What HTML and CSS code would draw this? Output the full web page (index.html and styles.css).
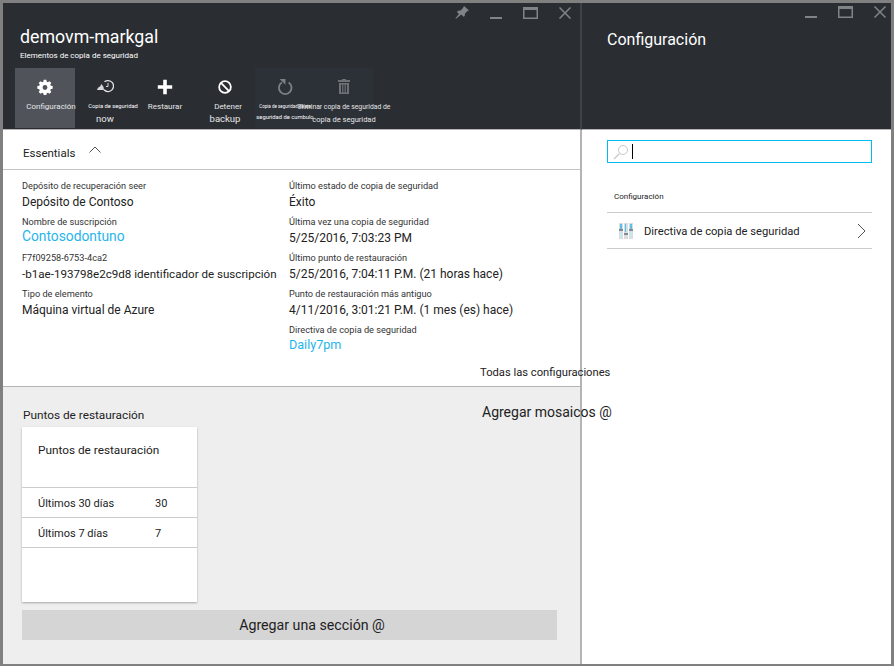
FILE: index.html
```html
<!DOCTYPE html>
<html lang="es">
<head>
    <meta charset="UTF-8">
    <title>demovm-markgal</title>
    <link rel="stylesheet" href="styles.css">
</head>
<body>

<div class="window">

    <section class="blade blade-main">
        <header class="blade-head main-head">
            <div class="win-controls main-controls">
                <svg class="win-icon" width="14" height="13" viewBox="0 0 14 13"><path d="M9 0l5 4.500-1.500.5-2.500 2.500-.3 2.500-1.200.8-2.200-2.300L1 12.800.4 12.300l3.500-4.200L2 6l1-1.200 2.500-.2L8 2z"/></svg>
                <svg class="win-icon" width="12" height="12" viewBox="0 0 12 12"><rect y="10" width="12" height="2"/></svg>
                <svg class="win-icon" width="15" height="12" viewBox="0 0 15 12"><path fill-rule="evenodd" d="M0 0h15v12H0zM1.500 3v7.500h12V3z"/></svg>
                <svg class="win-icon" width="12" height="12" viewBox="0 0 12 12"><path d="M.5.5l11 11M11.500.5l-11 11" stroke="#808487" stroke-width="1.500" fill="none"/></svg>
            </div>
            <h1 class="blade-title">demovm-markgal</h1>
            <p class="blade-sub">Elementos de copia de seguridad</p>
            <nav class="toolbar">
                <div class="cmd cmd-active">
                    <svg width="18" height="18" viewBox="-1 -1 20 20"><path fill="#fff" fill-rule="evenodd" d="M7.500 1h3l.4 2.100 1.300.6L14 2.500l2 2-1.200 1.800.6 1.300 2.100.4v3l-2.100.4-.6 1.300 1.200 1.800-2 2-1.800-1.200-1.300.6-.4 2.100h-3l-.4-2.100-1.300-.6L4 16.500l-2-2 1.200-1.800-.6-1.300L.5 11V8l2.100-.4.600-1.300L2 4.500l2-2 1.800 1.200 1.300-.6zM9 6.800a2.700 2.700 0 1 0 0 5.400 2.700 2.700 0 0 0 0-5.400z"/></svg>
                    <span class="cmd-label shift-config">Configuración</span>
                </div>
                <div class="cmd">
                    <svg width="18" height="18" viewBox="0 0 18 18"><path d="M8.500 3.800A5.500 5.500 0 1 1 8 11.800" fill="none" stroke="#e0e1e3" stroke-width="1.300"/><path d="M12 5v3.500h-2" fill="none" stroke="#d5d6d8"/><path d="M1 12c.5-2 1.500-3 3-3.500L5.500 6l2 3 .5 3z" fill="#d5d6d8"/></svg>
                    <span class="cmd-tiny shift-backup">Copia de seguridad</span>
                    <span class="cmd-big">now</span>
                </div>
                <div class="cmd">
                    <svg width="18" height="18" viewBox="-1 -1 20 20"><path fill="#fff" d="M7 1h4v6h6v4h-6v6H7v-6H1V7h6z"/></svg>
                    <span class="cmd-label">Restaurar</span>
                </div>
                <div class="cmd">
                    <svg width="18" height="18" viewBox="-1 -1 20 20"><circle cx="9" cy="9" r="6.500" fill="none" stroke="#fff" stroke-width="2"/><path d="M4.500 4.500l9 9" stroke="#fff" stroke-width="2"/></svg>
                    <span class="cmd-label shift-stop">Detener</span>
                    <span class="cmd-big">backup</span>
                </div>
                <div class="cmd cmd-off">
                    <svg width="18" height="18" viewBox="-1 -1 20 20"><path d="M5.500 4a7 7 0 1 0 7.500 0" fill="none" stroke="#7d8083" stroke-width="2"/><path d="M3 0h6.500v6.500z" fill="#7d8083"/></svg>
                    <span class="cmd-micro">Copia de seguridad de eje</span>
                    <span class="cmd-tiny">seguridad de cumbulo</span>
                </div>
                <div class="cmd cmd-off cmd-end">
                    <svg width="14" height="18" viewBox="0 0 14 18"><path fill="#6f7275" fill-rule="evenodd" d="M1 2h4V1h4v1h4v2H1zM2 5h10v11H2zM4 6.500v8h1.200v-8zM6.400 6.500v8h1.200v-8zM8.800 6.500v8H10v-8z"/></svg>
                    <span class="cmd-del">Eliminar copia de seguridad de</span>
                    <span class="cmd-del2">copia de seguridad</span>
                </div>
            </nav>
        </header>

        <div class="essentials-bar">
            <span>Essentials</span>
            <svg width="12" height="7" viewBox="0 0 12 7"><path d="M.5 6.500L6 1l5.500 5.500" fill="none" stroke="#555"/></svg>
        </div>

        <div class="essentials">
            <div class="col col-left">
                <div class="field"><span class="lbl">Depósito de recuperación seer</span><span class="val">Depósito de Contoso</span></div>
                <div class="field"><span class="lbl">Nombre de suscripción</span><a class="val link link-wide">Contosodontuno</a></div>
                <div class="field"><span class="lbl">F7f09258-6753-4ca2</span><span class="val val-tight">-b1ae-193798e2c9d8 identificador de suscripción</span></div>
                <div class="field"><span class="lbl">Tipo de elemento</span><span class="val">Máquina virtual de Azure</span></div>
            </div>
            <div class="col col-right">
                <div class="field"><span class="lbl">Último estado de copia de seguridad</span><span class="val">Éxito</span></div>
                <div class="field"><span class="lbl">Última vez una copia de seguridad</span><span class="val">5/25/2016, 7:03:23 PM</span></div>
                <div class="field"><span class="lbl">Último punto de restauración</span><span class="val">5/25/2016, 7:04:11 P.M. (21 horas hace)</span></div>
                <div class="field"><span class="lbl">Punto de restauración más antiguo</span><span class="val">4/11/2016, 3:01:21 P.M. (1 mes (es) hace)</span></div>
                <div class="field"><span class="lbl">Directiva de copia de seguridad</span><a class="val link link-policy">Daily7pm</a></div>
            </div>
        </div>

        <div class="all-settings">Todas las configuraciones</div>

        <div class="lens">
            <div class="add-tiles">Agregar mosaicos @</div>
            <h2 class="lens-title">Puntos de restauración</h2>
            <div class="tile">
                <div class="tile-title">Puntos de restauración</div>
                <div class="tile-row"><span class="row-name">Últimos 30 días</span><span class="num">30</span></div>
                <div class="tile-row"><span class="row-name">Últimos 7 días</span><span class="num">7</span></div>
            </div>
            <div class="add-section">Agregar una sección @</div>
        </div>
    </section>

    <section class="blade blade-side">
        <header class="blade-head">
            <div class="win-controls side-controls">
                <svg class="win-icon" width="12" height="12" viewBox="0 0 12 12"><rect y="10" width="12" height="2"/></svg>
                <svg class="win-icon" width="15" height="12" viewBox="0 0 15 12"><path fill-rule="evenodd" d="M0 0h15v12H0zM1.500 3v7.500h12V3z"/></svg>
                <svg class="win-icon" width="12" height="12" viewBox="0 0 12 12"><path d="M.5.5l11 11M11.500.5l-11 11" stroke="#808487" stroke-width="1.500" fill="none"/></svg>
            </div>
            <h2 class="side-title">Configuración</h2>
        </header>
        <div class="side-body">
            <div class="search">
                <svg width="16" height="16" viewBox="0 0 16 16"><circle cx="10" cy="6" r="4.500" fill="none" stroke="#c8c8c8"/><path d="M6.500 9.500L1 15" stroke="#c8c8c8" stroke-width="1.300"/></svg>
                <span class="caret"></span>
            </div>
            <div class="group-label">Configuración</div>
            <div class="list-row">
                <svg width="14" height="16" viewBox="0 0 14 16">
                    <path fill="#dcdcdc" d="M0 0h4v16H0zM5 0h4v16H5zM10 0h4v16h-4z"/>
                    <path fill="#5bbfe8" d="M1 1h2v5H1zM11 1h2v5h-2z"/>
                    <path fill="#c5e8f6" d="M1 8h2v7H1zM11 8h2v7h-2zM6 1h2v9H6z"/>
                    <path fill="#5bbfe8" d="M6 1h1v8H6z"/>
                    <path fill="#8a8a8a" d="M0 6h4v2H0zM10 6h4v2h-4zM5 10h4v2H5z"/>
                </svg>
                <span class="list-text">Directiva de copia de seguridad</span>
                <svg width="9" height="16" viewBox="0 0 9 16"><path d="M1 1l7 7-7 7" fill="none" stroke="#555"/></svg>
            </div>
        </div>
    </section>

</div>

</body>
</html>
```

FILE: styles.css
```css
* {
    box-sizing: border-box;
}
html, body {
    margin: 0;
    padding: 0;
}
body {
    width: 894px;
    height: 666px;
    overflow: hidden;
    font-family: Roboto, 'Liberation Sans', sans-serif;
    color: #222;
    background: #fff;
}
.window {
    display: flex;
    width: 894px;
    height: 666px;
    border: 3px solid #808080;
    border-bottom-width: 2px;
}
.blade {
    display: flex;
    flex-direction: column;
    position: relative;
}
.blade-main {
    width: 579px;
    flex: none;
    border-right: 2px solid #b4b4b4;
}
.blade-side {
    flex: 1;
}
.blade-head {
    position: relative;
    flex: none;
    height: 127px;
    background: #2a2e33;
    border-bottom: 1px solid #b4b4b4;
    color: #fff;
}
.main-head {
    margin-right: -2px;
    border-right: 2px solid #3f4347;
}
.win-controls {
    position: absolute;
    top: 3px;
    display: flex;
    gap: 21px;
    align-items: center;
}
.main-controls {
    right: 9px;
}
.side-controls {
    right: 5px;
}
.win-icon {
    fill: #808487;
}
.blade-title {
    margin: 0;
    padding: 22px 0 0 17px;
    font-size: 17.8px;
    font-weight: 400;
    line-height: 24px;
}
.blade-sub {
    margin: 0;
    padding: 2px 0 0 17px;
    font-size: 8px;
    line-height: 10px;
    white-space: nowrap;
}
.toolbar {
    display: flex;
    margin: 7px 0 0 12px;
    height: 60px;
}
.cmd {
    display: flex;
    flex-direction: column;
    align-items: center;
    width: 60px;
    height: 60px;
    padding-top: 10px;
    white-space: nowrap;
}
.cmd svg {
    flex: none;
    margin-bottom: 5px;
}
.cmd-active {
    background: #50545a;
}
.cmd-off {
    background: #2c3037;
}
.cmd-end {
    width: 58px;
}
.cmd-label {
    font-size: 8px;
    line-height: 12px;
    color: #e6e6e6;
}
.cmd-big {
    font-size: 9.5px;
    line-height: 12px;
    color: #e6e6e6;
}
.cmd-tiny {
    font-size: 5.8px;
    line-height: 11px;
    color: #fff;
}
.cmd-micro {
    font-size: 4.5px;
    line-height: 11px;
    color: #fff;
}
.cmd-del {
    font-size: 6.8px;
    line-height: 12px;
    color: #e6e6e6;
}
.cmd-del2 {
    font-size: 7.5px;
    line-height: 13px;
    color: #e6e6e6;
}
.shift-config {
    margin-left: 12px;
}
.shift-backup {
    margin-left: 16px;
    margin-bottom: 1px;
}
.shift-stop {
    margin-left: 6px;
}
.essentials-bar {
    display: flex;
    align-items: center;
    flex: none;
    gap: 14px;
    height: 40px;
    padding: 7px 0 0 20px;
    font-size: 11.5px;
    border-bottom: 1px solid #c4c4c4;
}
.essentials-bar svg {
    margin-bottom: 8px;
}
.essentials {
    display: flex;
    flex: none;
    height: 216px;
    padding: 9px 0 0 19px;
}
.col-left {
    width: 267px;
}
.field {
    display: flex;
    flex-direction: column;
    height: 36px;
    white-space: nowrap;
}
.lbl {
    font-size: 9.2px;
    line-height: 14px;
    color: #333;
}
.val {
    font-size: 12px;
    line-height: 18px;
    color: #222;
}
.val-tight {
    font-size: 11.6px;
}
.link {
    color: #1fb5ec;
}
.link-wide {
    font-size: 13.8px;
    line-height: 15px;
}
.link-policy {
    font-size: 12.6px;
    line-height: 16px;
}
.all-settings {
    position: absolute;
    top: 362px;
    left: 477px;
    font-size: 11.2px;
    line-height: 16px;
    white-space: nowrap;
    z-index: 2;
}
.lens {
    position: relative;
    flex: 1;
    background: #eee;
    border-top: 1px solid #b4b4b4;
    padding: 19px 0 0 19px;
}
.add-tiles {
    position: absolute;
    top: 15px;
    left: 479px;
    font-size: 14px;
    line-height: 20px;
    white-space: nowrap;
    z-index: 2;
}
.lens-title {
    margin: 0 0 3px;
    padding-left: 1px;
    font-size: 11.8px;
    font-weight: 400;
    line-height: 18px;
}
.tile {
    width: 175px;
    height: 175px;
    background: #fff;
    box-shadow: 0 1px 2px rgba(0,0,0,0.3);
}
.tile-title {
    height: 61px;
    padding: 16px 0 0 16px;
    font-size: 11.8px;
    border-bottom: 1px solid #ccc;
}
.tile-row {
    display: flex;
    align-items: center;
    height: 30px;
    padding: 1px 0 0 16px;
    font-size: 11px;
    border-bottom: 1px solid #ccc;
}
.row-name {
    width: 117px;
}
.add-section {
    width: 535px;
    height: 30px;
    margin-top: 8px;
    padding-left: 45px;
    background: #d5d5d5;
    font-size: 14.2px;
    line-height: 30px;
    text-align: center;
}
.side-title {
    margin: 0;
    padding: 26px 0 0 25px;
    font-size: 16px;
    font-weight: 400;
    line-height: 22px;
}
.side-body {
    padding: 10px 19px 0 25px;
}
.search {
    display: flex;
    align-items: center;
    gap: 3px;
    height: 23px;
    padding-left: 5px;
    border: 1px solid #00bcf2;
}
.caret {
    width: 1px;
    height: 15px;
    background: #000;
}
.group-label {
    height: 50px;
    padding: 27px 0 0 7px;
    font-size: 8px;
    line-height: 14px;
    border-bottom: 1px solid #ccc;
}
.list-row {
    display: flex;
    align-items: center;
    height: 36px;
    padding: 0 6px 0 12px;
    border-bottom: 1px solid #ccc;
}
.list-text {
    flex: 1;
    padding: 1px 0 0 11px;
    font-size: 11.2px;
}
```
